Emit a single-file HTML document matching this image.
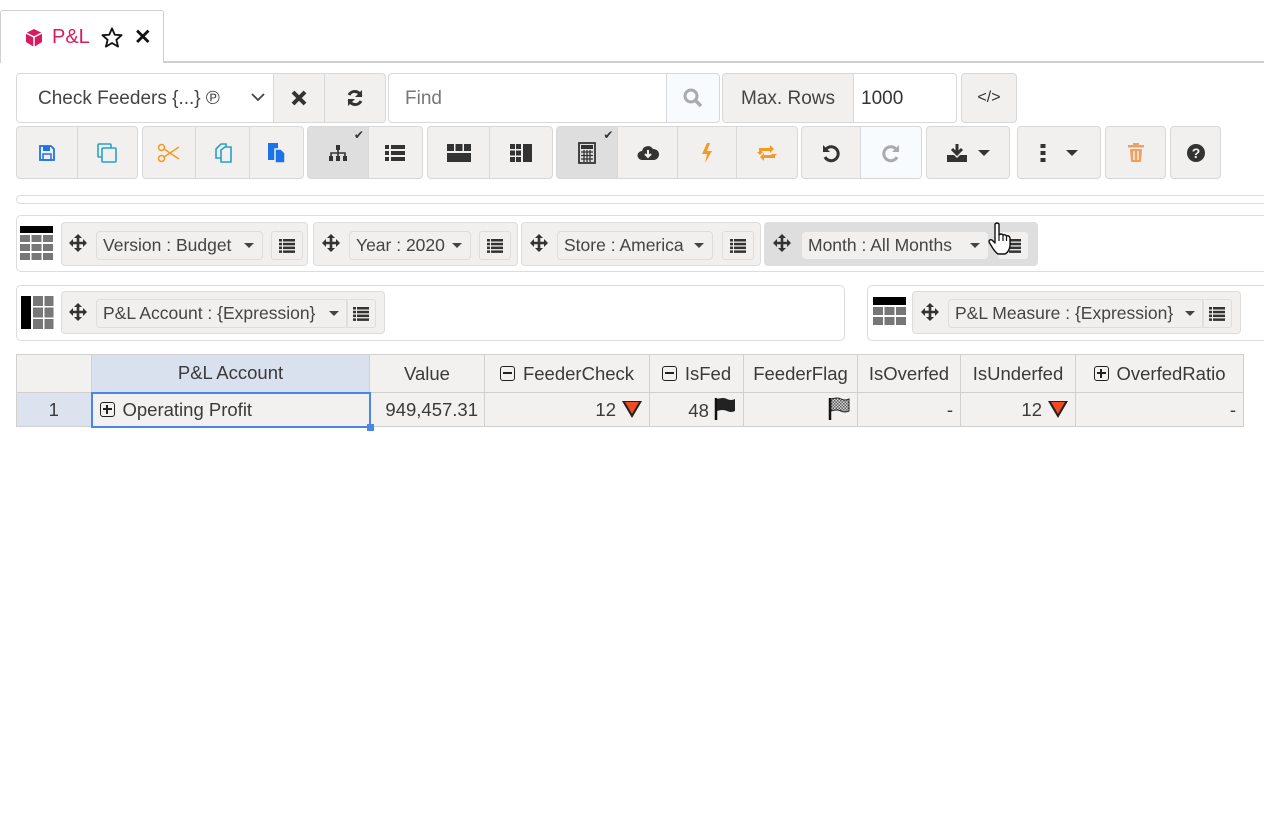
<!DOCTYPE html>
<html><head><meta charset="utf-8"><style>
*{box-sizing:border-box;margin:0;padding:0}
body{width:1264px;height:816px;background:#fff;font-family:"Liberation Sans",sans-serif;color:#3a3a3a;position:relative;overflow:hidden;font-size:18px}
.a{position:absolute}
.btn{position:absolute;background:#f1f0ef;border:1.5px solid #d8d8d8;display:flex;align-items:center;justify-content:center}
.grp{position:absolute;border:1.5px solid #d8d8d8;border-radius:4px;background:#f1f0ef;display:flex;overflow:hidden}
.grp>div{display:flex;align-items:center;justify-content:center;border-right:1.5px solid #d8d8d8;height:100%;position:relative}
.grp>div:last-child{border-right:none}
.chk{position:absolute;top:1px;right:4px;font-size:12px;color:#333}
.box{position:absolute;border:1.5px solid #dcdcdc;border-radius:5px;background:#fff}
.chip{position:absolute;background:#f1f0ef;border:1.5px solid #ddd;border-radius:4px}
.sel{position:absolute;background:#f1f0ef;border:1.5px solid #ddd;border-radius:4px;font-size:17.5px;display:flex;align-items:center;padding-left:6px;color:#444}
.car{position:absolute;right:8px;top:11px;width:0;height:0;border-left:5px solid transparent;border-right:5px solid transparent;border-top:5px solid #444}
.lst{position:absolute;border:1.5px solid #ddd;border-radius:3px;display:flex;align-items:center;justify-content:center}
.mv{position:absolute}
table{position:absolute;left:16px;top:354px;border-collapse:collapse;font-size:18.5px}
td{border:1.5px solid #d0d0d0;background:#f2f1f0;height:38px;padding:0 7px;white-space:nowrap;color:#3a3a3a}
tr.d td{height:34px;text-align:right}
.tri{display:inline-block;width:0;height:0;border-left:10px solid transparent;border-right:10px solid transparent;border-top:17px solid #222;position:relative;vertical-align:-2px;margin-left:6px}
.tri:after{content:"";position:absolute;left:-7.5px;top:-15.5px;border-left:7.5px solid transparent;border-right:7.5px solid transparent;border-top:12.5px solid #f04a24}
.pm{display:inline-block;width:15px;height:15px;border:1.5px solid #222;border-radius:3px;position:relative;vertical-align:-1px;margin-right:8px}
.pm:before{content:"";position:absolute;left:2px;right:2px;top:5.5px;height:1.5px;background:#222}
.pm.p:after{content:"";position:absolute;top:2px;bottom:2px;left:5.5px;width:1.5px;background:#222}
</style></head><body>
<svg width="0" height="0" style="position:absolute"><defs>
<symbol id="mv" viewBox="0 0 20 20"><path d="M10 1 L14 5 H11.3 V8.7 H15 V6 L19 10 L15 14 V11.3 H11.3 V15 H14 L10 19 L6 15 H8.7 V11.3 H5 V14 L1 10 L5 6 V8.7 H8.7 V5 H6 Z" fill="#333"/></symbol>
<symbol id="ls" viewBox="0 0 16 14"><g fill="#333"><rect x="0" y="0" width="3" height="2.5"/><rect x="4" y="0" width="12" height="2.5"/><rect x="0" y="3.8" width="3" height="2.5"/><rect x="4" y="3.8" width="12" height="2.5"/><rect x="0" y="7.6" width="3" height="2.5"/><rect x="4" y="7.6" width="12" height="2.5"/><rect x="0" y="11.4" width="3" height="2.5"/><rect x="4" y="11.4" width="12" height="2.5"/></g></symbol>
</defs></svg>

<!-- tab -->
<div class="a" style="left:0;top:10px;width:164px;height:53px;border:1.5px solid #cfcfcf;border-bottom:none;border-radius:3px 3px 0 0;background:#fff"></div>
<div class="a" style="left:163px;top:61px;width:1101px;height:1.5px;background:#cfcfcf"></div>
<svg class="a" style="left:24px;top:28px" width="20" height="20" viewBox="0 0 20 20"><path d="M10 1 L18 5 L18 14 L10 19 L2 14 L2 5 Z" fill="#d81b60"/><path d="M2 5 L10 9 L18 5 M10 9 V19" stroke="#fff" stroke-width="1.5" fill="none"/></svg>
<div class="a" style="left:52px;top:26px;font-size:20px;color:#d81b60">P&amp;L</div>
<svg class="a" style="left:101px;top:27px" width="22" height="21" viewBox="0 0 24 23"><path d="M12 1.5 L15 8.5 L22.5 9 L16.8 14 L18.6 21.5 L12 17.5 L5.4 21.5 L7.2 14 L1.5 9 L9 8.5 Z" fill="none" stroke="#111" stroke-width="2" stroke-linejoin="round"/></svg>
<div class="a" style="left:134px;top:25px;font-size:21px;font-weight:bold;color:#111">✕</div>

<!-- row 1 -->
<div class="a" style="left:16px;top:73px;width:258px;height:50px;border:1.5px solid #d8d8d8;border-radius:4px 0 0 4px;background:#fff;font-size:19px;padding:14px 0 0 21px;color:#444">Check Feeders {...} ℗</div>
<svg class="a" style="left:251px;top:93px" width="14" height="10"><path d="M1 1 L7 7 L13 1" stroke="#444" stroke-width="1.8" fill="none"/></svg>
<div class="btn" style="left:273px;top:73px;width:52px;height:50px"><svg width="16" height="16"><path d="M2 2 L14 14 M14 2 L2 14" stroke="#333" stroke-width="4"/></svg></div>
<div class="btn" style="left:324px;top:73px;width:62px;height:50px;border-radius:0 4px 4px 0"><svg width="20" height="20" viewBox="0 0 20 20"><path d="M16 8 A6.5 6.5 0 0 0 4 7" stroke="#333" stroke-width="3" fill="none"/><path d="M17 2 V9 H10 Z" fill="#333"/><path d="M4 12 A6.5 6.5 0 0 0 16 13" stroke="#333" stroke-width="3" fill="none"/><path d="M3 18 V11 H10 Z" fill="#333"/></svg></div>
<div class="a" style="left:388px;top:73px;width:280px;height:50px;border:1.5px solid #d8d8d8;border-radius:4px 0 0 4px;background:#fff;font-size:19px;padding:14px 0 0 16px;color:#777">Find</div>
<div class="btn" style="left:666px;top:73px;width:54px;height:50px;background:#f8fbfd;border-radius:0 4px 4px 0"><svg width="20" height="20"><circle cx="8" cy="8" r="6" stroke="#aaa" stroke-width="3" fill="none"/><path d="M12 12 L18 18" stroke="#aaa" stroke-width="3.5"/></svg></div>
<div class="btn" style="left:722px;top:73px;width:132px;height:50px;border-radius:4px 0 0 4px;font-size:19px;color:#444;padding-top:2px">Max. Rows</div>
<div class="a" style="left:853px;top:73px;width:104px;height:50px;border:1.5px solid #d8d8d8;border-radius:0 4px 4px 0;background:#fff;font-size:19px;padding:14px 0 0 7px;color:#333">1000</div>
<div class="btn" style="left:961px;top:73px;width:56px;height:50px;border-radius:4px;font-size:16px;color:#333">&lt;/&gt;</div>

<!-- row 2 -->
<div class="grp" style="left:16px;top:126px;width:122px;height:53px">
<div style="width:62px"><svg width="18" height="18"><path d="M2 2 H13 L16 5 V16 H2 Z" fill="none" stroke="#1a73e8" stroke-width="1.8"/><rect x="5" y="2" width="7" height="5" fill="#1a73e8"/><rect x="5" y="10" width="8" height="6" fill="none" stroke="#1a73e8" stroke-width="1.5"/></svg></div>
<div style="width:60px"><svg width="22" height="22"><rect x="2" y="2" width="13" height="13" rx="1" fill="none" stroke="#29a0c8" stroke-width="1.6"/><rect x="6" y="6" width="14" height="14" rx="1" fill="#f1f0ef" stroke="#29a0c8" stroke-width="1.6"/></svg></div></div>
<div class="grp" style="left:142px;top:126px;width:162px;height:53px">
<div style="width:54px"><svg width="24" height="20"><circle cx="4.5" cy="4.5" r="3" fill="none" stroke="#f59a23" stroke-width="1.6"/><circle cx="4.5" cy="15.5" r="3" fill="none" stroke="#f59a23" stroke-width="1.6"/><path d="M7 6 L22 16 M7 14 L22 4" stroke="#f59a23" stroke-width="1.5"/></svg></div>
<div style="width:54px"><svg width="22" height="22"><path d="M4 7 L9 2 H14 V16 H4 Z" fill="none" stroke="#29a0c8" stroke-width="1.6"/><path d="M9 8 L13 5 H19 V20 H9 Z" fill="#f1f0ef" stroke="#29a0c8" stroke-width="1.6"/></svg></div>
<div style="width:54px"><svg width="22" height="22"><rect x="3" y="1" width="10" height="17" fill="#1a73e8"/><path d="M10 7 H16 L20 11 V21 H10 Z" fill="#1a73e8" stroke="#f1f0ef" stroke-width="1.5"/></svg></div></div>
<div class="grp" style="left:307px;top:126px;width:116px;height:53px">
<div style="width:62px;background:#dedede"><svg width="20" height="18"><rect x="8" y="1" width="4" height="5" fill="#333"/><path d="M10 6 V9 M3 12 V9 H17 V12 M10 9 V12" stroke="#333" stroke-width="1.6" fill="none"/><rect x="1" y="12" width="4" height="5" fill="#333"/><rect x="8" y="12" width="4" height="5" fill="#333"/><rect x="15" y="12" width="4" height="5" fill="#333"/></svg><span class="chk">✔</span></div>
<div style="width:54px"><svg width="22" height="18"><rect x="1" y="1" width="4" height="4" fill="#333"/><rect x="7" y="1" width="14" height="4" fill="#333"/><rect x="1" y="7" width="4" height="4" fill="#333"/><rect x="7" y="7" width="14" height="4" fill="#333"/><rect x="1" y="13" width="4" height="4" fill="#333"/><rect x="7" y="13" width="14" height="4" fill="#333"/></svg></div></div>
<div class="grp" style="left:427px;top:126px;width:126px;height:53px">
<div style="width:63px"><svg width="26" height="20"><rect x="1" y="1" width="7" height="7" fill="#333"/><rect x="9.5" y="1" width="7" height="7" fill="#333"/><rect x="18" y="1" width="7" height="7" fill="#333"/><rect x="1" y="10" width="24" height="9" fill="#333"/></svg></div>
<div style="width:63px"><svg width="24" height="20"><rect x="1" y="1" width="5" height="5" fill="#333"/><rect x="7" y="1" width="5" height="5" fill="#333"/><rect x="1" y="7.5" width="5" height="5" fill="#333"/><rect x="7" y="7.5" width="5" height="5" fill="#333"/><rect x="1" y="14" width="5" height="5" fill="#333"/><rect x="7" y="14" width="5" height="5" fill="#333"/><rect x="14" y="1" width="9" height="18" fill="#333"/></svg></div></div>
<div class="grp" style="left:556px;top:126px;width:242px;height:53px">
<div style="width:62px;background:#dedede"><svg width="18" height="22"><rect x="1" y="1" width="16" height="20" fill="none" stroke="#333" stroke-width="1.8"/><rect x="3" y="3" width="12" height="4" fill="#333"/><path d="M3 10 H15 M3 13.5 H15 M3 17 H15 M6 8 V20 M9 8 V20 M12 8 V20" stroke="#333" stroke-width="1.3"/></svg><span class="chk">✔</span></div>
<div style="width:60px"><svg width="22" height="18"><path d="M5 16 A4.5 4.5 0 0 1 5 7 A6 6 0 0 1 16 5 A5 5 0 0 1 17 16 Z" fill="#333"/><path d="M11 6 V12 M8 10 L11 13 L14 10" stroke="#f1f0ef" stroke-width="2" fill="none"/></svg></div>
<div style="width:60px"><svg width="14" height="22"><path d="M7 1 L2 12 H7 L5 21 L12 9 H7 L10 1 Z" fill="#f59a23"/></svg></div>
<div style="width:60px"><svg width="22" height="18"><path d="M3 8 V4 H14 V1 L18 5 L14 9 V7 H6 V8 Z" fill="#f59a23"/><path d="M19 10 V14 H8 V17 L4 13 L8 9 V11 H16 V10 Z" fill="#f59a23"/><path d="M1 8 H7 L4 11 Z M15 10 H21 L18 13Z" fill="#f59a23"/></svg></div></div>
<div class="grp" style="left:801px;top:126px;width:121px;height:53px">
<div style="width:60px"><svg width="20" height="20"><path d="M5 6 A7 7 0 1 1 4 14" stroke="#333" stroke-width="3" fill="none"/><path d="M2 2 V9 H9 Z" fill="#333"/></svg></div>
<div style="width:61px;background:#f8fbfd"><svg width="20" height="20"><path d="M15 6 A7 7 0 1 0 16 14" stroke="#aaa" stroke-width="3" fill="none"/><path d="M18 2 V9 H11 Z" fill="#aaa"/></svg></div></div>
<div class="btn" style="left:926px;top:126px;width:84px;height:53px;border-radius:4px"><svg width="22" height="20"><path d="M11 1 V10 M6 6 L11 11 L16 6" stroke="#333" stroke-width="3" fill="none"/><path d="M1 12 H8 L11 15 L14 12 H21 V19 H1 Z" fill="#333"/></svg><span style="margin-left:10px;border-left:6px solid transparent;border-right:6px solid transparent;border-top:6px solid #333"></span></div>
<div class="btn" style="left:1017px;top:126px;width:84px;height:53px;border-radius:4px"><svg width="6" height="20"><rect x="0.5" y="1" width="5" height="4" fill="#333"/><rect x="0.5" y="8" width="5" height="4" fill="#333"/><rect x="0.5" y="15" width="5" height="4" fill="#333"/></svg><span style="margin-left:20px;border-left:6px solid transparent;border-right:6px solid transparent;border-top:6px solid #333"></span></div>
<div class="btn" style="left:1105px;top:126px;width:61px;height:53px;border-radius:4px"><svg width="16" height="20"><rect x="0" y="2" width="16" height="2.5" fill="#f0a060"/><rect x="5" y="0" width="6" height="2.5" fill="#f0a060"/><path d="M2 6 H14 L13 19 H3 Z" fill="#f0a060"/><path d="M6 8 V17 M10 8 V17" stroke="#fff" stroke-width="1.2"/></svg></div>
<div class="btn" style="left:1170px;top:126px;width:51px;height:53px;border-radius:4px"><svg width="20" height="20"><circle cx="10" cy="10" r="9" fill="#333"/><text x="10" y="15" text-anchor="middle" font-family="Liberation Sans" font-weight="bold" font-size="14" fill="#f1f0ef">?</text></svg></div>

<!-- thin box -->
<div class="box" style="left:16px;top:195px;width:1260px;height:9px"></div>

<!-- filter box -->
<div class="box" style="left:16px;top:215px;width:1260px;height:57px"></div>
<svg class="a" style="left:20px;top:226px" width="33" height="34"><rect x="0" y="0" width="33" height="7" fill="#000"/><g fill="#777"><rect x="0" y="9" width="10" height="7"/><rect x="11.5" y="9" width="10" height="7"/><rect x="23" y="9" width="10" height="7"/><rect x="0" y="18" width="10" height="7"/><rect x="11.5" y="18" width="10" height="7"/><rect x="23" y="18" width="10" height="7"/><rect x="0" y="27" width="10" height="7"/><rect x="11.5" y="27" width="10" height="7"/><rect x="23" y="27" width="10" height="7"/></g></svg>

<div class="chip" style="left:61px;top:222px;width:247px;height:44px"></div>
<svg class="mv" style="left:68px;top:233px" width="20" height="20"><use href="#mv"/></svg>
<div class="sel" style="left:96px;top:231px;width:167px;height:29px">Version : Budget<span class="car"></span></div>
<div class="lst" style="left:271px;top:231px;width:32px;height:29px"><svg width="16" height="14"><use href="#ls"/></svg></div>

<div class="chip" style="left:313px;top:222px;width:205px;height:44px"></div>
<svg class="mv" style="left:321px;top:233px" width="20" height="20"><use href="#mv"/></svg>
<div class="sel" style="left:349px;top:231px;width:122px;height:29px">Year : 2020<span class="car"></span></div>
<div class="lst" style="left:479px;top:231px;width:32px;height:29px"><svg width="16" height="14"><use href="#ls"/></svg></div>

<div class="chip" style="left:521px;top:222px;width:240px;height:44px"></div>
<svg class="mv" style="left:529px;top:233px" width="20" height="20"><use href="#mv"/></svg>
<div class="sel" style="left:557px;top:231px;width:156px;height:29px">Store : America<span class="car"></span></div>
<div class="lst" style="left:722px;top:231px;width:32px;height:29px"><svg width="16" height="14"><use href="#ls"/></svg></div>

<div class="chip" style="left:764px;top:222px;width:274px;height:44px;background:#dedede;border-color:#dedede"></div>
<svg class="mv" style="left:772px;top:233px" width="20" height="20"><use href="#mv"/></svg>
<div class="sel" style="left:802px;top:232px;width:186px;height:27px;border:none">Month : All Months<span class="car"></span></div>
<div class="lst" style="left:998px;top:232px;width:30px;height:27px;border:none;background:#f1f0ef"><svg width="16" height="14"><use href="#ls"/></svg></div>
<svg class="a" style="left:988px;top:222px" width="24" height="34" viewBox="0 0 24 34"><path d="M7 2 Q9 0 11 2 V13 Q13 11 15 13 Q17 12 18.5 14 Q21 13 22 16 V24 Q21 30 17 32 H10 Q7 30 4 25 L1 20 Q1 17 4 18 L7 21 Z" fill="#fff" stroke="#111" stroke-width="1.4" stroke-linejoin="round"/><path d="M11 13 V19 M15 13 V19 M18.5 14 V19" stroke="#111" stroke-width="1.2"/></svg>

<!-- row box -->
<div class="box" style="left:16px;top:285px;width:829px;height:56px"></div>
<svg class="a" style="left:21px;top:296px" width="33" height="33"><rect x="0" y="0" width="10" height="33" fill="#000"/><g fill="#777"><rect x="12" y="0" width="10" height="10"/><rect x="23.5" y="0" width="9" height="10"/><rect x="12" y="11.5" width="10" height="10"/><rect x="23.5" y="11.5" width="9" height="10"/><rect x="12" y="23" width="10" height="10"/><rect x="23.5" y="23" width="9" height="10"/></g></svg>
<div class="chip" style="left:61px;top:291px;width:324px;height:43px"></div>
<svg class="mv" style="left:68px;top:302px" width="20" height="20"><use href="#mv"/></svg>
<div class="sel" style="left:96px;top:299px;width:252px;height:29px">P&amp;L Account : {Expression}<span class="car"></span></div>
<div class="lst" style="left:346px;top:299px;width:30px;height:29px;border-radius:0 3px 3px 0"><svg width="16" height="14"><use href="#ls"/></svg></div>

<!-- col box -->
<div class="box" style="left:867px;top:285px;width:410px;height:56px"></div>
<svg class="a" style="left:873px;top:297px" width="33" height="28"><rect x="0" y="0" width="33" height="8" fill="#000"/><g fill="#777"><rect x="0" y="10" width="10" height="8"/><rect x="11.5" y="10" width="10" height="8"/><rect x="23" y="10" width="10" height="8"/><rect x="0" y="20" width="10" height="8"/><rect x="11.5" y="20" width="10" height="8"/><rect x="23" y="20" width="10" height="8"/></g></svg>
<div class="chip" style="left:912px;top:291px;width:329px;height:43px"></div>
<svg class="mv" style="left:920px;top:302px" width="20" height="20"><use href="#mv"/></svg>
<div class="sel" style="left:948px;top:299px;width:256px;height:29px">P&amp;L Measure : {Expression}<span class="car"></span></div>
<div class="lst" style="left:1202px;top:299px;width:30px;height:29px;border-radius:0 3px 3px 0"><svg width="16" height="14"><use href="#ls"/></svg></div>

<!-- table -->
<table>
<tr>
<td style="width:75px"></td>
<td style="width:278px;text-align:center;background:#d9e1ee">P&amp;L Account</td>
<td style="width:115px;text-align:center">Value</td>
<td style="width:165px;text-align:center"><span class="pm"></span>FeederCheck</td>
<td style="width:94px;text-align:center"><span class="pm"></span>IsFed</td>
<td style="width:114px;text-align:center">FeederFlag</td>
<td style="width:103px;text-align:center">IsOverfed</td>
<td style="width:115px;text-align:center">IsUnderfed</td>
<td style="width:168px;text-align:center"><span class="pm p"></span>OverfedRatio</td>
</tr>
<tr class="d">
<td style="text-align:center;background:#dce3ef">1</td>
<td style="text-align:left;border:2px solid #4a86e8;position:relative"><span class="pm p"></span>Operating Profit<span style="position:absolute;right:-5px;bottom:-5px;width:7px;height:7px;background:#4a86e8"></span></td>
<td style="padding:0 6px">949,457.31</td>
<td>12<span class="tri"></span></td>
<td>48 <svg width="22" height="24" style="vertical-align:-4px"><path d="M2 1 V23" stroke="#111" stroke-width="2.5"/><path d="M3 2 Q10 0 13 2 Q17 4 21 2 V14 Q17 16 13 14 Q9 12 3 14 Z" fill="#222"/></svg></td>
<td><svg width="22" height="24" style="vertical-align:-4px"><defs><pattern id="ck" width="3" height="3" patternUnits="userSpaceOnUse"><rect width="3" height="3" fill="#ddd"/><rect width="1.5" height="1.5" fill="#555"/><rect x="1.5" y="1.5" width="1.5" height="1.5" fill="#555"/></pattern></defs><path d="M2 1 V23" stroke="#111" stroke-width="2.5"/><path d="M3 2 Q10 0 13 2 Q17 4 21 2 V14 Q17 16 13 14 Q9 12 3 14 Z" fill="url(#ck)" stroke="#222" stroke-width="1"/></svg></td>
<td>-</td>
<td>12<span class="tri"></span></td>
<td>-</td>
</tr>
</table>
</body></html>
